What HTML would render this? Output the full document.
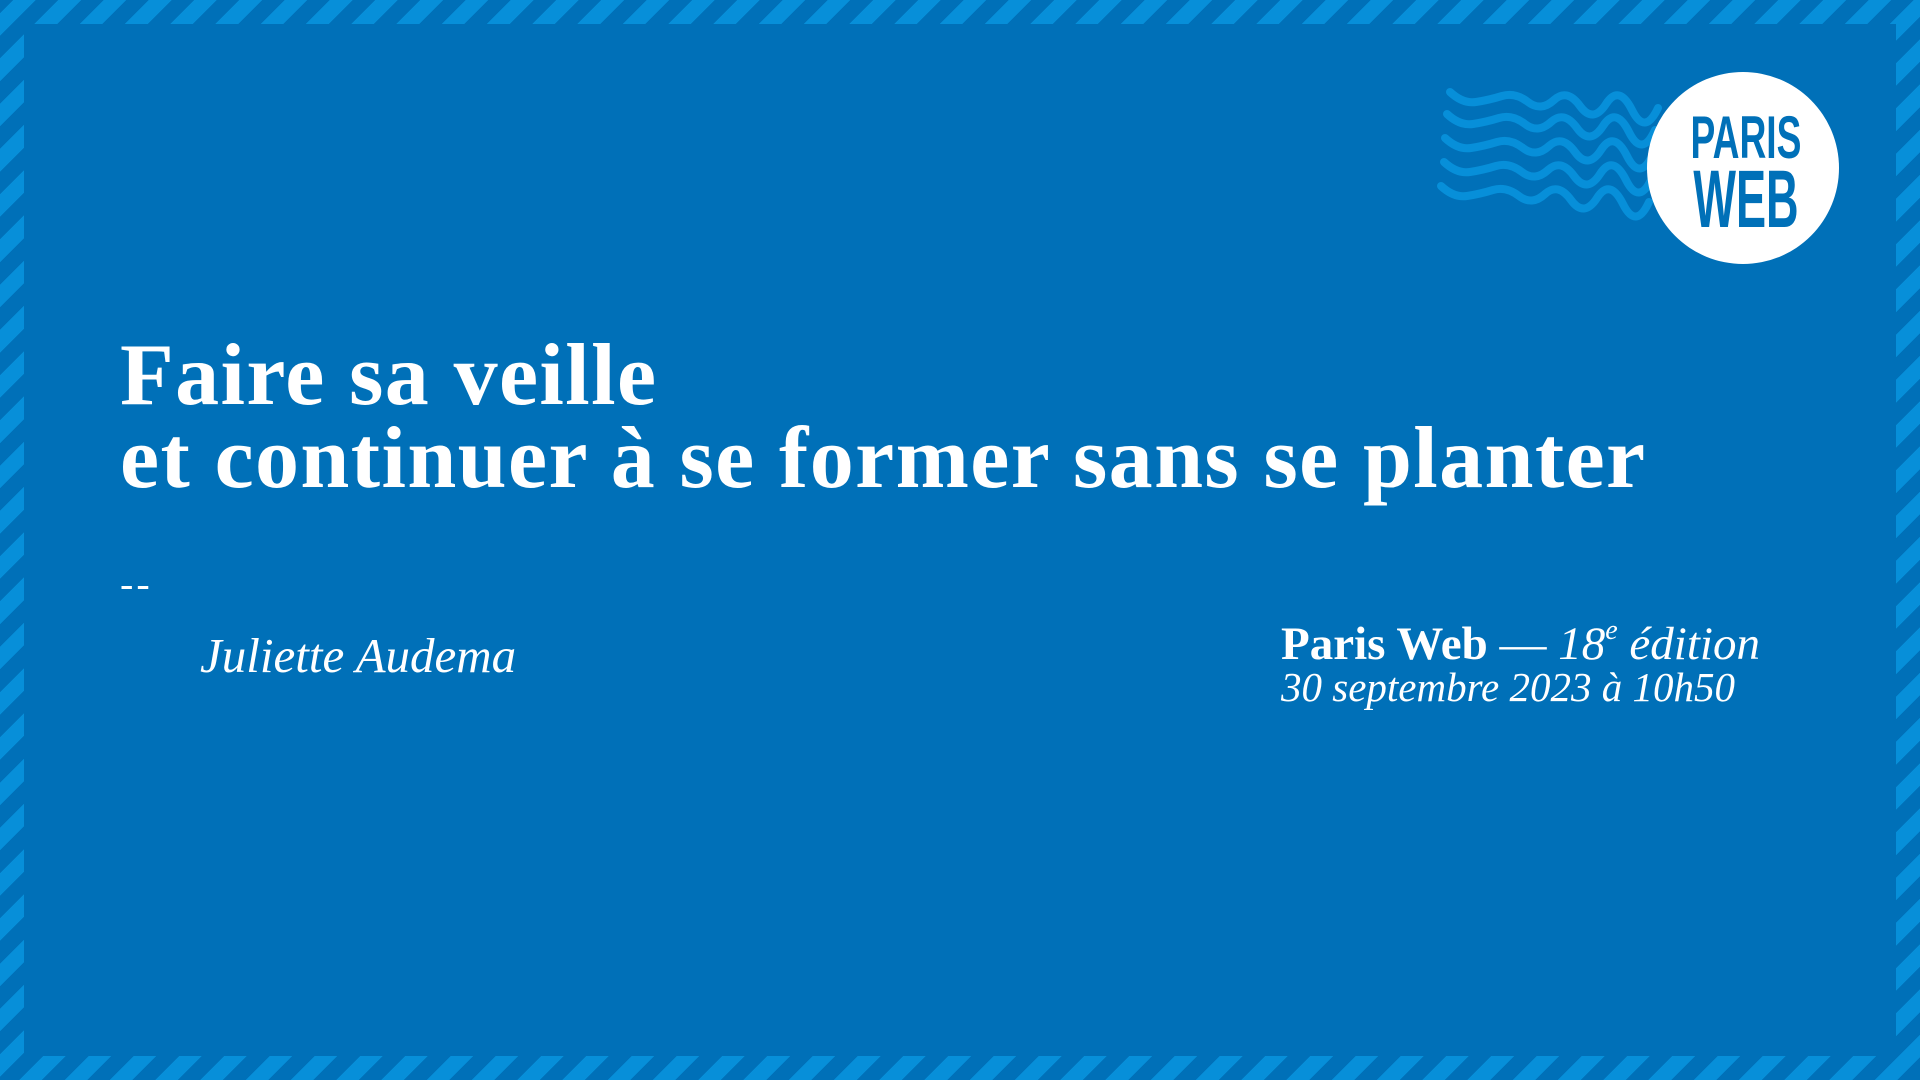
<!DOCTYPE html>
<html><head><meta charset="utf-8"><style>
html,body{margin:0;padding:0}
body{width:1920px;height:1080px;position:relative;overflow:hidden;
background:repeating-linear-gradient(-45deg,#0070b8 0 16px,#078fd9 16px 32px);
font-family:"Liberation Serif",serif;color:#fff}
.inner{position:absolute;left:24px;top:24px;right:24px;bottom:24px;background:#0070b8}
.t{position:absolute;left:120px;font-weight:bold;font-size:88px;letter-spacing:1.4px;white-space:nowrap;line-height:1}
.dash{position:absolute;left:120px;top:560px;font-size:40px;letter-spacing:3px}
.name{position:absolute;left:200px;top:631px;font-style:italic;font-size:49px;line-height:1}
.r1{position:absolute;left:1281px;top:621px;font-size:47px;line-height:1;white-space:nowrap}
.r2{position:absolute;left:1281px;top:667px;font-size:41px;font-style:italic;line-height:1;white-space:nowrap}
</style></head><body>
<div class="inner"></div>
<svg style="position:absolute;left:0;top:0" width="1920" height="1080">
<g fill="none" stroke="#078fd9" stroke-width="8" stroke-linecap="round">
<path id="w" d="M1450 92 q13 12 26 10 t26 -6 t26 6 t26 -2 t26 6 t26 -2 t26 6 t26 -2"/>
<use href="#w" transform="translate(-3,22)"/>
<use href="#w" transform="translate(-5,46)"/>
<use href="#w" transform="translate(-6,70)"/>
<use href="#w" transform="translate(-9,94)"/>
</g>
<circle cx="1743" cy="168" r="96" fill="#fff"/>
<g fill="#0070b8" font-family="Liberation Sans, sans-serif" font-weight="bold">
<text x="1746" y="158" font-size="60" text-anchor="middle" transform="translate(1746 0) scale(0.62 1) translate(-1746 0)">PARIS</text>
<text x="1746" y="227" font-size="82" text-anchor="middle" transform="translate(1746 0) scale(0.55 1) translate(-1746 0)">WEB</text>
</g>
</svg>
<div class="t" style="top:332px">Faire sa veille</div>
<div class="t" style="top:415px">et continuer à se former sans se planter</div>
<div class="dash">--</div>
<div class="name">Juliette Audema</div>
<div class="r1"><b>Paris Web</b> — <i>18<sup style="font-size:28px;vertical-align:20px;line-height:0">e</sup> édition</i></div>
<div class="r2">30 septembre 2023 à 10h50</div>
</body></html>
